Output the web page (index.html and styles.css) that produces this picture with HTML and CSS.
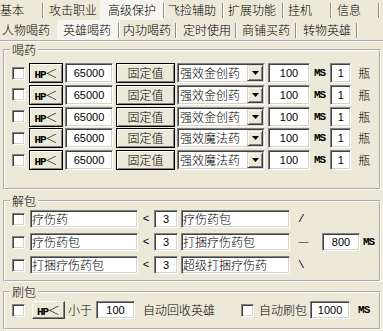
FILE: index.html
```html
<!DOCTYPE html>
<html>
<head>
<meta charset="utf-8">
<link rel="stylesheet" href="styles.css">
</head>
<body>
<div class="tabrow">
  <div class="tab r1a">基本</div><i class="sep"></i>
  <div class="tab r1b">攻击职业</div>
  <div class="tab on r1c">高级保护</div><i class="sep"></i>
  <div class="tab r1d">飞捡辅助</div><i class="sep"></i>
  <div class="tab r1e">扩展功能</div><i class="sep"></i>
  <div class="tab r1f">挂机</div><i class="sep"></i>
  <div class="tab r1g">信息</div><i class="sep"></i>
</div>
<div class="tabrow">
  <div class="tab r2a">人物喝药</div>
  <div class="tab on r2b">英雄喝药</div><i class="sep"></i>
  <div class="tab r2c">内功喝药</div><i class="sep"></i>
  <div class="tab r2d">定时使用</div><i class="sep"></i>
  <div class="tab r2e">商铺买药</div><i class="sep"></i>
  <div class="tab r2f">转物英雄</div><i class="sep"></i>
</div>
<div class="panel">
  <fieldset class="grp grp1">
    <legend>喝药</legend>
    <div class="rows1">
      <div class="row1">
        <span class="chk"></span>
        <span class="btn hp"><b class="lat">HP</b>＜</span>
        <span class="edit num e65">65000</span>
        <span class="btn mode">固定值</span>
        <span class="combo"><span class="combo-in"><span class="ctext">强效金创药</span><span class="drop"><svg width="7" height="4" viewBox="0 0 7 4"><polygon points="0,0 7,0 3.5,4" fill="#000"/></svg></span></span></span>
        <span class="edit num e100">100</span>
        <span class="lat ms">MS</span>
        <span class="edit num e1">1</span>
        <span class="ping">瓶</span>
      </div>
      <div class="row1">
        <span class="chk"></span>
        <span class="btn hp"><b class="lat">HP</b>＜</span>
        <span class="edit num e65">65000</span>
        <span class="btn mode">固定值</span>
        <span class="combo"><span class="combo-in"><span class="ctext">强效金创药</span><span class="drop"><svg width="7" height="4" viewBox="0 0 7 4"><polygon points="0,0 7,0 3.5,4" fill="#000"/></svg></span></span></span>
        <span class="edit num e100">100</span>
        <span class="lat ms">MS</span>
        <span class="edit num e1">1</span>
        <span class="ping">瓶</span>
      </div>
      <div class="row1">
        <span class="chk"></span>
        <span class="btn hp"><b class="lat">HP</b>＜</span>
        <span class="edit num e65">65000</span>
        <span class="btn mode">固定值</span>
        <span class="combo"><span class="combo-in"><span class="ctext">强效金创药</span><span class="drop"><svg width="7" height="4" viewBox="0 0 7 4"><polygon points="0,0 7,0 3.5,4" fill="#000"/></svg></span></span></span>
        <span class="edit num e100">100</span>
        <span class="lat ms">MS</span>
        <span class="edit num e1">1</span>
        <span class="ping">瓶</span>
      </div>
      <div class="row1">
        <span class="chk"></span>
        <span class="btn hp"><b class="lat">HP</b>＜</span>
        <span class="edit num e65">65000</span>
        <span class="btn mode">固定值</span>
        <span class="combo"><span class="combo-in"><span class="ctext">强效魔法药</span><span class="drop"><svg width="7" height="4" viewBox="0 0 7 4"><polygon points="0,0 7,0 3.5,4" fill="#000"/></svg></span></span></span>
        <span class="edit num e100">100</span>
        <span class="lat ms">MS</span>
        <span class="edit num e1">1</span>
        <span class="ping">瓶</span>
      </div>
      <div class="row1">
        <span class="chk"></span>
        <span class="btn hp"><b class="lat">HP</b>＜</span>
        <span class="edit num e65">65000</span>
        <span class="btn mode">固定值</span>
        <span class="combo"><span class="combo-in"><span class="ctext">强效魔法药</span><span class="drop"><svg width="7" height="4" viewBox="0 0 7 4"><polygon points="0,0 7,0 3.5,4" fill="#000"/></svg></span></span></span>
        <span class="edit num e100">100</span>
        <span class="lat ms">MS</span>
        <span class="edit num e1">1</span>
        <span class="ping">瓶</span>
      </div>
    </div>
  </fieldset>

  <fieldset class="grp grp2">
    <legend>解包</legend>
    <div class="rows2">
      <div class="row2">
        <span class="chk"></span>
        <span class="edit txt n1">疗伤药</span>
        <span class="lt lat">&lt;</span>
        <span class="edit num e3">3</span>
        <span class="edit txt n2">疗伤药包</span>
        <span class="sym lat">/</span>
      </div>
      <div class="row2">
        <span class="chk"></span>
        <span class="edit txt n1">疗伤药包</span>
        <span class="lt lat">&lt;</span>
        <span class="edit num e3">3</span>
        <span class="edit txt n2">打捆疗伤药包</span>
        <span class="sym">一</span>
        <span class="edit num e800">800</span>
        <span class="lat ms ms2">MS</span>
      </div>
      <div class="row2">
        <span class="chk"></span>
        <span class="edit txt n1">打捆疗伤药包</span>
        <span class="lt lat">&lt;</span>
        <span class="edit num e3">3</span>
        <span class="edit txt n2">超级打捆疗伤药</span>
        <span class="sym lat">\</span>
      </div>
    </div>
  </fieldset>

  <fieldset class="grp grp3">
    <legend>刷包</legend>
    <div class="row3">
      <span class="chk"></span>
      <span class="btn2 hp2"><b class="lat">HP</b>＜</span>
      <span class="lbl xiaoyu">小于</span>
      <span class="edit num e100b">100</span>
      <span class="lbl huishou">自动回收英雄</span>
      <span class="chk chk2"></span>
      <span class="lbl shuabao">自动刷包</span>
      <span class="edit num e1000">1000</span>
      <span class="lat ms ms3">MS</span>
    </div>
  </fieldset>
</div>
</body>
</html>
```
FILE: styles.css
```css
* { box-sizing: border-box; }
html, body { margin: 0; padding: 0; }
body {
  width: 383px;
  height: 331px;
  overflow: hidden;
  background: #ECE9D8;
  color: #000;
  font: 300 12px/14px "Noto Sans CJK SC", "Liberation Sans", sans-serif;
}

/* tabs */
.tabrow { display: flex; align-items: center; height: 20px; }
.tab { flex: none; height: 20px; line-height: 20px; white-space: nowrap; }
.tab.on { background: #F6F5F0; }
.sep { flex: none; width: 2px; height: 15px; border-left: 1px solid #8E8C84; border-right: 1px solid #fff; }
.r1a { width: 42px; padding-left: 0; }
.r1b { width: 56px; padding-left: 5px; }
.r1c { width: 63px; padding-left: 8px; }
.r1d { width: 57px; padding-left: 3px; }
.r1e { width: 58px; padding-left: 4px; }
.r1f { width: 46px; padding-left: 4px; }
.r1g { width: 46px; padding-left: 5px; }
.r2a { width: 57px; padding-left: 2px; }
.r2b { width: 61px; padding-left: 6px; }
.r2c { width: 55px; padding-left: 3px; }
.r2d { width: 58px; padding-left: 6px; }
.r2e { width: 58px; padding-left: 5px; }
.r2f { width: 59px; padding-left: 6px; }

/* panel + groups */
.panel { width: 383px; height: 291px; border-top: 2px groove #fff; }
.grp {
  margin: 1px 0 0 3px;
  width: 378px;
  min-inline-size: 0;
  border: 2px groove #fff;
  padding: 6px 0 18px 7px;
}
.grp legend { padding: 0 2px; margin-left: -2px; line-height: 14px; }
.grp2 { margin-top: 4px; padding-top: 2px; padding-bottom: 6px; }
.grp3 { margin-top: 3px; padding-top: 2px; padding-bottom: 9px; }

.lat { font-family: "Liberation Mono", monospace; }

/* controls */
.chk {
  flex: none;
  width: 13px; height: 13px;
  background: #fff;
  border: 1px solid; border-color: #848284 #fff #fff #848284;
  box-shadow: inset 1px 1px 0 #424142, inset -1px -1px 0 #D6D3CE;
}
.edit {
  flex: none;
  height: 20px;
  background: #fff;
  border: 1px solid; border-color: #848284 #fff #fff #848284;
  box-shadow: inset 1px 1px 0 #424142, inset -1px -1px 0 #D6D3CE;
  white-space: nowrap;
  overflow: hidden;
}
.num { font: 400 11px/18px "Liberation Sans", sans-serif; text-align: center; }
.txt { line-height: 16px; padding-left: 1px; }
.btn {
  flex: none;
  height: 20px;
  border: 1px solid #000;
  box-shadow: inset 1px 1px 0 #fff, inset -1px -1px 0 #848284;
  text-align: center;
  line-height: 18px;
  white-space: nowrap;
}
.btn2 {
  flex: none;
  height: 18px;
  border: 1px solid; border-color: #fff #424142 #424142 #fff;
  box-shadow: inset -1px -1px 0 #848284;
  text-align: center;
  line-height: 16px;
  white-space: nowrap;
}
.hp b, .hp2 b { font-size: 11px; font-weight: bold; letter-spacing: -1px; }

/* group 1 */
.rows1 { display: flex; flex-direction: column; gap: 1.75px; }
.row1 { display: flex; align-items: center; height: 20px; }
.hp { width: 34px; margin-left: 4px; }
.e65 { width: 48px; margin-left: 2px; }
.mode { width: 59px; margin-left: 3px; }
.combo {
  flex: none;
  width: 88px; height: 20px; margin-left: 2px;
  border: 1px solid; border-color: #848284 #fff #fff #848284;
  background: #fff;
}
.combo-in {
  display: flex; height: 18px;
  border: 1px solid; border-color: #424142 #D6D3CE #D6D3CE #424142;
}
.ctext { flex: 1; padding-left: 1px; line-height: 16px; white-space: nowrap; overflow: hidden; }
.drop {
  flex: none;
  width: 16px; height: 16px;
  display: flex; align-items: center; justify-content: center;
  background: #ECE9D8;
  border: 1px solid; border-color: #D6D3CE #424142 #424142 #D6D3CE;
  box-shadow: inset 1px 1px 0 #fff, inset -1px -1px 0 #848284;
}
.drop svg { display: block; }
.e100 { width: 42px; margin-left: 3px; }
.ms { font-size: 11px; font-weight: bold; margin-left: 4px; letter-spacing: -1px; }
.e1 { width: 21px; margin-left: 5px; }
.ping { margin-left: 7px; }

/* group 2 */
.rows2 { display: flex; flex-direction: column; gap: 5px; }
.row2 { display: flex; align-items: center; height: 18px; }
.row2 .edit { height: 18px; }
.row2 .num { line-height: 16px; }
.n1 { width: 108px; margin-left: 5px; }
.lt { flex: none; width: 16px; text-align: center; font-size: 11px; }
.e3 { width: 24px; }
.n2 { width: 109px; margin-left: 3px; }
.sym { flex: none; width: 32px; padding-left: 8px; font-size: 11px; }
.e800 { width: 38px; }
.ms2 { margin-left: 3px; }

/* group 3 */
.row3 { display: flex; align-items: center; height: 18px; }
.row3 .edit { height: 18px; }
.row3 .num { line-height: 16px; }
.hp2 { width: 33px; margin-left: 7px; }
.lbl { flex: none; white-space: nowrap; }
.xiaoyu { margin-left: 3px; }
.e100b { width: 39px; margin-left: 4px; }
.huishou { margin-left: 8px; }
.chk2 { margin-left: 26px; }
.shuabao { margin-left: 5px; }
.e1000 { width: 40px; margin-left: 3px; }
.ms3 { margin-left: 8px; }
```
